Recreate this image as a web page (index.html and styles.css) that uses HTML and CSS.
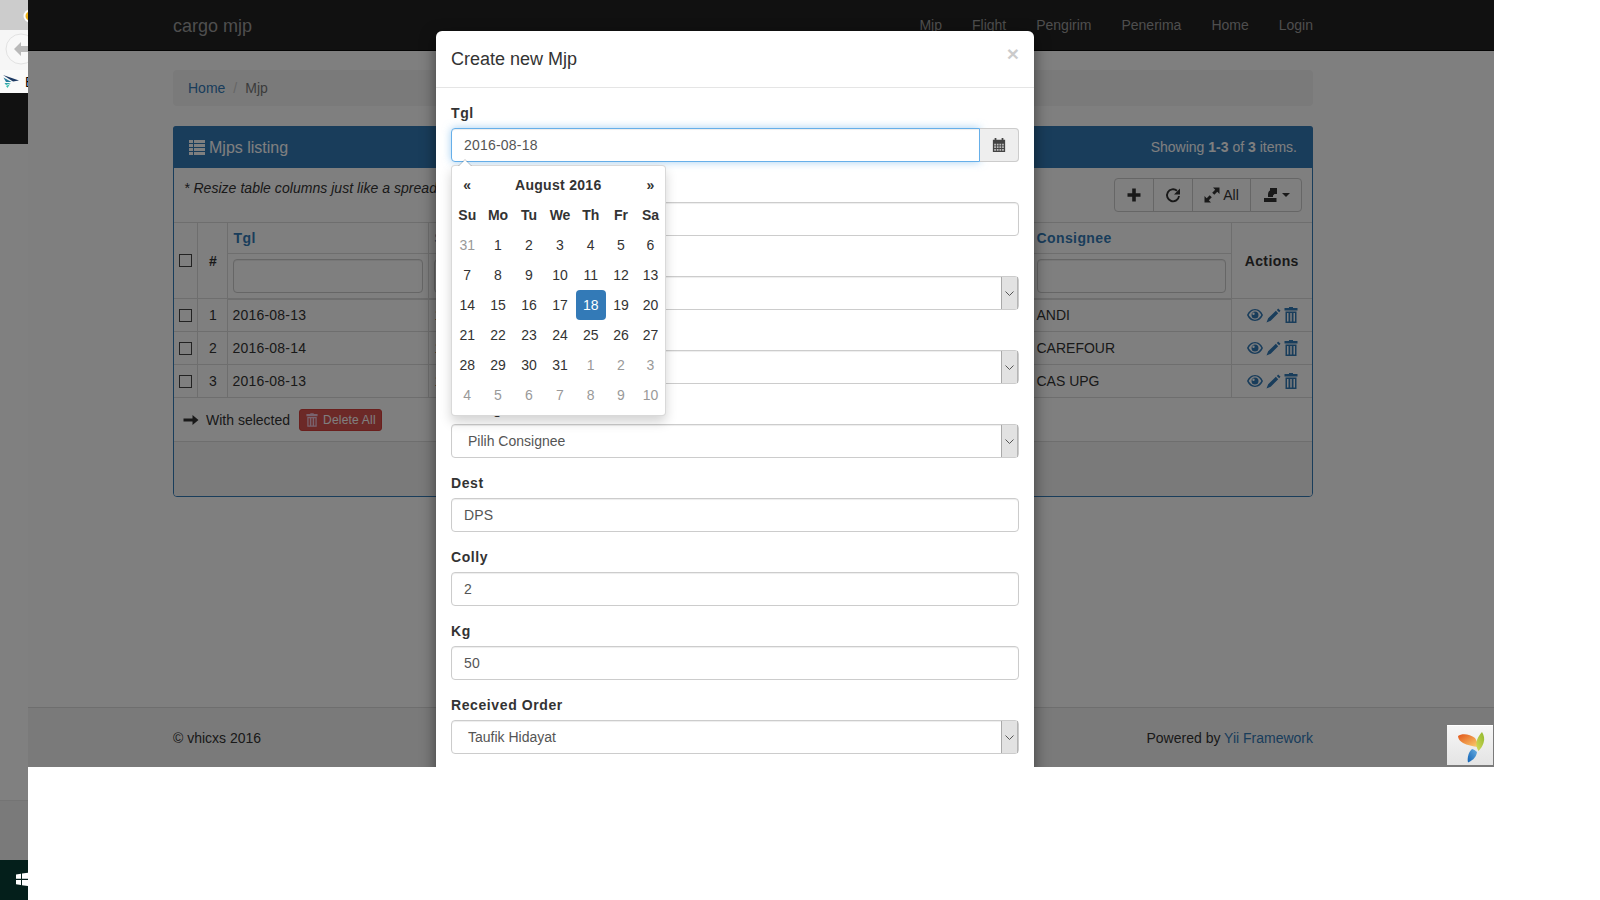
FILE: index.html
```html
<!DOCTYPE html>
<html lang="en">
<head>
  <meta charset="UTF-8" />
  <meta name="viewport" content="width=device-width, initial-scale=1" />
  <title>Mjp</title>
  <link rel="stylesheet" href="styles.css">
</head>
<body>

  <svg class="sprites">
    <symbol id="i-eye" viewBox="0 0 16 12"><path fill-rule="evenodd" d="M8 0C4 0 1.200 3 0 6c1.200 3 4 6 8 6s6.800-3 8-6c-1.200-3-4-6-8-6zM8 1.300c-2.600 0-4.900 2-6.300 4.700 1.400 2.700 3.700 4.700 6.300 4.700s4.900-2 6.300-4.700C12.900 3.300 10.600 1.300 8 1.300zM8 2.500a3.500 3.500 0 1 1 0 7 3.500 3.500 0 0 1 0-7zM6.500 3.500a1.200 1.200 0 1 0 0 2.400 1.200 1.200 0 0 0 0-2.400z"/></symbol>
    <symbol id="i-pencil" viewBox="0 0 16 16"><path d="M13 .5l2.500 2.500-1.500 1.500L11.500 2zM10.500 3L13 5.500l-8 8L.5 15.500l1.800-4.500z"/></symbol>
    <symbol id="i-trash" viewBox="0 0 14 16"><path fill-rule="evenodd" d="M5 0h4v1h4.500v2.500H.5V1H5zM1.500 4.500h11V16h-11zM3 6v8.500h1.500V6zM6.250 6v8.500h1.500V6zM9.500 6v8.500H11V6z"/></symbol>
    <symbol id="i-chevron" viewBox="0 0 9 5"><path d="M.5.500l4 4 4-4" fill="none" stroke="#555"/></symbol>
  </svg>

  <!-- sliver of the other window on the left -->
  <div class="strip">
    <div class="strip-tab">
      <svg class="strip-chrome" width="14" height="14" viewBox="0 0 14 14"><circle cx="7" cy="7" r="6.500" fill="#fff"/><path d="M2.500 7a4.500 4.500 0 0 1 4.500-4.500V7z" fill="#f1b51c"/><path d="M2.500 7a4.500 4.500 0 0 0 4.500 4.500V7z" fill="#e8b020"/></svg>
    </div>
    <div class="strip-toolbar">
      <svg width="28" height="40" viewBox="0 0 28 40"><circle cx="21" cy="19" r="15" fill="#f8f8f8" stroke="#e2e2e2"/><path d="M14 19l7-7v4h7v6h-7v4z" fill="#b9b9b9"/></svg>
    </div>
    <div class="strip-bookmarks">
      <svg class="strip-logo" width="16" height="13" viewBox="0 0 16 13"><path d="M0 0l16 5.500-6 1z" fill="#1d3a63"/><path d="M.5 2.500l8 4.500-5.500 0z" fill="#2b7f9e"/><path d="M1.500 8h6.500l-5 2z" fill="#2fa5a8"/><path d="M3 11l4-2-2.500 4z" fill="#3dbfb0"/></svg>
      <span class="strip-letter">B</span>
    </div>
    <div class="strip-black"></div>
    <div class="strip-grey"></div>
    <div class="strip-shelf"></div>
    <div class="strip-taskbar">
      <svg width="12" height="15" viewBox="0 0 12 15"><path d="M0 2.500l5-.7v5H0zM6 1.600L12 .8v6H6zM0 8h5v5l-5-.7zM6 8h6v6l-6-.8z" fill="#fff"/></svg>
    </div>
  </div>

  <div class="main">
    <nav class="navbar">
      <div class="container navbar-inner">
        <a class="brand">cargo mjp</a>
        <div class="nav-links">
          <a>Mjp</a>
          <a>Flight</a>
          <a>Pengirim</a>
          <a>Penerima</a>
          <a>Home</a>
          <a>Login</a>
        </div>
      </div>
    </nav>

    <div class="container">
      <div class="breadcrumb">
        <a>Home</a>
        <span class="crumb-sep">/</span>
        <span class="crumb-active">Mjp</span>
      </div>

      <div class="panel">
        <div class="panel-heading">
          <h3 class="panel-title">
            <svg class="icon icon-list" viewBox="0 0 16 16"><path d="M0 0h4v3H0zM5 0h11v3H5zM0 4h4v3H0zM5 4h11v3H5zM0 8h4v3H0zM5 8h11v3H5zM0 12h4v3H0zM5 12h11v3H5z"/></svg>
            Mjps listing
          </h3>
          <div class="summary">Showing <b>1-3</b> of <b>3</b> items.</div>
        </div>

        <div class="panel-tools">
          <em class="tools-note">* Resize table columns just like a spreadsheet by dragging the column edges.</em>
          <div class="btn-group">
            <a class="btn btn-add"><svg class="icon icon-lg" viewBox="0 0 16 16"><path d="M6.200 1.500h3.600v4.700h4.700v3.600H9.800v4.700H6.200V9.800H1.500V6.200h4.700z"/></svg></a>
            <a class="btn btn-add"><svg class="icon icon-lg" viewBox="0 0 16 16"><path d="M14 9a6 6 0 1 1-2-5.200" fill="none" stroke="#333" stroke-width="1.900"/><path d="M15 1.500v6H9z"/></svg></a>
            <a class="btn btn-all"><svg class="icon icon-lg" viewBox="0 0 16 16"><path d="M15.500.5v6.500l-2.200-2.200-3 3-2.100-2.100 3-3L9 .5zM.5 15.500V9l2.200 2.200 3-3 2.100 2.100-3 3L7 15.500z"/></svg> All</a>
            <a class="btn btn-export">
              <svg class="icon icon-lg" viewBox="0 0 16 16"><path d="M1 11h12.500v4H1zM5 10V7.500C5 5 6 4 7 3.500V1h7v6h-2.500L10 8.500V10z"/></svg>
              <span class="caret"></span>
            </a>
          </div>
        </div>

        <table class="grid">
          <colgroup>
            <col class="col-check"><col class="col-num"><col class="col-date">
            <col class="col-mid"><col class="col-mid"><col class="col-mid">
            <col class="col-consignee"><col class="col-actions">
          </colgroup>
          <thead>
            <tr class="head-row">
              <th rowspan="2" class="cell-check"><input type="checkbox"></th>
              <th rowspan="2" class="cell-num">#</th>
              <th><a>Tgl</a></th>
              <th><a>Smu</a></th>
              <th><a>Flight</a></th>
              <th><a>Shipper</a></th>
              <th><a>Consignee</a></th>
              <th rowspan="2" class="cell-center">Actions</th>
            </tr>
            <tr class="filter-row">
              <td><input class="filter" type="text"></td>
              <td><input class="filter" type="text"></td>
              <td><input class="filter" type="text"></td>
              <td><input class="filter" type="text"></td>
              <td><input class="filter" type="text"></td>
            </tr>
          </thead>
          <tbody>
            <tr>
              <td class="cell-check"><input type="checkbox"></td>
              <td class="cell-num">1</td>
              <td class="cell-date">2016-08-13</td>
              <td>126-1001</td>
              <td>GA 642</td>
              <td>VHICXS</td>
              <td>ANDI</td>
              <td class="cell-center">
                <span class="actions">
                  <svg class="icon-eye"><use href="#i-eye"/></svg>
                  <svg class="icon-pencil"><use href="#i-pencil"/></svg>
                  <svg class="icon-trash"><use href="#i-trash"/></svg>
                </span>
              </td>
            </tr>
            <tr>
              <td class="cell-check"><input type="checkbox"></td>
              <td class="cell-num">2</td>
              <td class="cell-date">2016-08-14</td>
              <td>126-1002</td>
              <td>GA 642</td>
              <td>VHICXS</td>
              <td>CAREFOUR</td>
              <td class="cell-center">
                <span class="actions">
                  <svg class="icon-eye"><use href="#i-eye"/></svg>
                  <svg class="icon-pencil"><use href="#i-pencil"/></svg>
                  <svg class="icon-trash"><use href="#i-trash"/></svg>
                </span>
              </td>
            </tr>
            <tr>
              <td class="cell-check"><input type="checkbox"></td>
              <td class="cell-num">3</td>
              <td class="cell-date">2016-08-13</td>
              <td>126-1003</td>
              <td>GA 642</td>
              <td>VHICXS</td>
              <td>CAS UPG</td>
              <td class="cell-center">
                <span class="actions">
                  <svg class="icon-eye"><use href="#i-eye"/></svg>
                  <svg class="icon-pencil"><use href="#i-pencil"/></svg>
                  <svg class="icon-trash"><use href="#i-trash"/></svg>
                </span>
              </td>
            </tr>
          </tbody>
        </table>

        <div class="panel-after">
          <svg class="icon icon-lg icon-arrow" viewBox="0 0 16 16"><path d="M.5 6.500h9V3L15.500 8l-6 5V9.500h-9z"/></svg>
          <span class="with-selected">With selected</span>
          <a class="btn-delete">
            <svg class="icon-delete"><use href="#i-trash"/></svg>
            Delete All
          </a>
        </div>
        <div class="panel-footer"></div>
      </div>
    </div>

    <footer class="footer">
      <div class="container footer-inner">
        <span>© vhicxs 2016</span>
        <span>Powered by <a>Yii Framework</a></span>
      </div>
    </footer>

    <div class="backdrop"></div>

    <div class="modal">
      <div class="modal-header">
        <h4 class="modal-title">Create new Mjp</h4>
        <span class="close">×</span>
      </div>
      <div class="modal-body">
        <div class="form-group">
          <label>Tgl</label>
          <div class="input-group">
            <input class="form-control focused" type="text" value="2016-08-18">
            <span class="addon">
              <svg class="icon" viewBox="0 0 16 16"><path d="M3 0h2v2h6V0h2v2h2v14H1V2h2z" fill="#444"/><path d="M2.500 6.500h2v2h-2zM5.500 6.500h2v2h-2zM8.500 6.500h2v2h-2zM11.500 6.500h2v2h-2zM2.500 9.500h2v2h-2zM5.500 9.500h2v2h-2zM8.500 9.500h2v2h-2zM11.500 9.500h2v2h-2zM2.500 12.500h2v2h-2zM5.500 12.500h2v2h-2zM8.500 12.500h2v2h-2zM11.500 12.500h2v2h-2z" fill="#bbb"/></svg>
            </span>
          </div>
        </div>
        <div class="form-group">
          <label>Smu</label>
          <input class="form-control" type="text">
        </div>
        <div class="form-group">
          <label>Flight</label>
          <div class="select"><span>Pilih Flight</span><span class="select-btn"><svg><use href="#i-chevron"/></svg></span></div>
        </div>
        <div class="form-group">
          <label>Shipper</label>
          <div class="select"><span>Pilih Shipper</span><span class="select-btn"><svg><use href="#i-chevron"/></svg></span></div>
        </div>
        <div class="form-group">
          <label>Consignee</label>
          <div class="select"><span>Pilih Consignee</span><span class="select-btn"><svg><use href="#i-chevron"/></svg></span></div>
        </div>
        <div class="form-group">
          <label>Dest</label>
          <input class="form-control" type="text" value="DPS">
        </div>
        <div class="form-group">
          <label>Colly</label>
          <input class="form-control" type="text" value="2">
        </div>
        <div class="form-group">
          <label>Kg</label>
          <input class="form-control" type="text" value="50">
        </div>
        <div class="form-group">
          <label>Received Order</label>
          <div class="select"><span>Taufik Hidayat</span><span class="select-btn"><svg><use href="#i-chevron"/></svg></span></div>
        </div>
      </div>

      <div class="datepicker">
        <div class="dp-grid">
          <b>«</b><b class="dp-month">August 2016</b><b>»</b>
          <b>Su</b><b>Mo</b><b>Tu</b><b>We</b><b>Th</b><b>Fr</b><b>Sa</b>
          <i>31</i><span>1</span><span>2</span><span>3</span><span>4</span><span>5</span><span>6</span>
          <span>7</span><span>8</span><span>9</span><span>10</span><span>11</span><span>12</span><span>13</span>
          <span>14</span><span>15</span><span>16</span><span>17</span><span class="dp-active">18</span><span>19</span><span>20</span>
          <span>21</span><span>22</span><span>23</span><span>24</span><span>25</span><span>26</span><span>27</span>
          <span>28</span><span>29</span><span>30</span><span>31</span><i>1</i><i>2</i><i>3</i>
          <i>4</i><i>5</i><i>6</i><i>7</i><i>8</i><i>9</i><i>10</i>
        </div>
      </div>
    </div>

    <div class="yii-badge">
      <svg width="30" height="31" viewBox="0 0 30 31">
        <defs>
          <linearGradient id="petalOrange" x1="0" x2="1" y1="0" y2="1"><stop offset="0" stop-color="#e2561a"/><stop offset="1" stop-color="#fbd070"/></linearGradient>
          <linearGradient id="petalGreen" x1="1" x2="0" y1="0" y2="1"><stop offset="0" stop-color="#8fb82e"/><stop offset="1" stop-color="#d6d958"/></linearGradient>
          <linearGradient id="petalBlue" x1="1" x2="0" y1="0" y2="1"><stop offset="0" stop-color="#6aaee0"/><stop offset="1" stop-color="#0f62b5"/></linearGradient>
        </defs>
        <path d="M1 4C5 1 13 2 18 6c1.500 2 2.500 5 3 9-5-.5-11-2-15-4C3 9 1 7 1 4z" fill="url(#petalOrange)"/>
        <path d="M25 0c2 3 3 7 1.500 11-1 3-3 6-5 8-2-3-3-7-1.500-11 1-3 3-6 5-8z" fill="url(#petalGreen)"/>
        <path d="M15 17c2 .5 4 2 5 3-.5 4-3 8-9 10.500-.5-2-.5-5 .5-8 .5-2 2-4 3.500-5.500z" fill="url(#petalBlue)"/>
      </svg>
    </div>
  </div>

</body>
</html>
```

FILE: styles.css
```css
* {
  box-sizing: border-box;
}

body {
  margin: 0;
  display: flex;
  align-items: flex-start;
  height: 900px;
  overflow: hidden;
  background: #fff;
  font-family: "Liberation Sans", Arial, sans-serif;
  font-size: 14px;
  line-height: 20px;
  color: #333;
}

a {
  color: #337ab7;
  text-decoration: none;
}

.sprites {
  display: none;
}

/* left sliver */
.strip {
  width: 28px;
  height: 900px;
  flex-shrink: 0;
  overflow: hidden;
  display: flex;
  flex-direction: column;
}

.strip-tab {
  height: 30px;
  background: #ccc;
  padding: 9px 0 0 23px;
}

.strip-chrome {
  display: block;
}

.strip-toolbar {
  height: 40px;
  background: #f6f6f6;
}

.strip-toolbar svg {
  display: block;
}

.strip-bookmarks {
  height: 23px;
  background: #fafafa;
  display: flex;
  align-items: center;
  padding-left: 3px;
}

.strip-logo {
  flex-shrink: 0;
}

.strip-letter {
  margin-left: 6px;
  color: #000;
  font-size: 14px;
}

.strip-black {
  height: 51px;
  background: #111;
}

.strip-grey {
  height: 657px;
  background: #808080;
  border-bottom: 1px solid #747474;
}

.strip-shelf {
  height: 59px;
  background: #7a7a7a;
}

.strip-taskbar {
  height: 40px;
  background: #041f1b;
  padding: 12px 0 0 16px;
}

.strip-taskbar svg {
  display: block;
}

/* page behind the modal */
.main {
  position: relative;
  width: 1466px;
  height: 767px;
  flex-shrink: 0;
  overflow: hidden;
  background: #fff;
  display: flex;
  flex-direction: column;
}

.container {
  width: 1140px;
  margin-left: 145px;
}

.navbar {
  height: 51px;
  flex-shrink: 0;
  background: #222;
  border-bottom: 1px solid #080808;
}

.navbar-inner {
  height: 50px;
  display: flex;
  justify-content: space-between;
  align-items: center;
}

.brand {
  font-size: 18px;
  color: #9d9d9d;
  margin-top: 2px;
}

.nav-links {
  display: flex;
  gap: 30px;
  color: #9d9d9d;
  margin-top: -1px;
}

.nav-links a {
  color: #9d9d9d;
}

.breadcrumb {
  height: 36px;
  margin: 19px 0 20px;
  padding: 8px 15px;
  background: #f5f5f5;
  border-radius: 4px;
  display: flex;
}

.crumb-sep {
  color: #ccc;
  padding: 0 8px;
}

.crumb-active {
  color: #777;
}

.panel {
  height: 371px;
  border: 1px solid #337ab7;
  border-radius: 4px;
  background: #fff;
  display: flex;
  flex-direction: column;
}

.panel-heading {
  margin: -1px -1px 0;
  height: 42px;
  flex-shrink: 0;
  background: #337ab7;
  border-radius: 3px 3px 0 0;
  padding: 0 16px;
  display: flex;
  justify-content: space-between;
  align-items: center;
  color: #fff;
}

.panel-title {
  margin: 0;
  padding-top: 1px;
  font-size: 16px;
  font-weight: 400;
  display: flex;
  align-items: center;
  gap: 4px;
}

.icon {
  width: 14px;
  height: 14px;
  fill: #333;
  flex-shrink: 0;
}

.icon-lg {
  width: 16px;
  height: 16px;
}

.icon-list {
  width: 16px;
  height: 16px;
  fill: #fff;
}

.panel-tools {
  height: 54px;
  flex-shrink: 0;
  padding: 10px;
  display: flex;
  justify-content: space-between;
}

.tools-note {
  letter-spacing: 0.04px;
}

.btn-group {
  display: flex;
  height: 34px;
}

.btn {
  height: 34px;
  border: 1px solid #ccc;
  margin-left: -1px;
  background: #fff;
  color: #333;
  display: flex;
  align-items: center;
  justify-content: center;
  gap: 3px;
}

.btn-add {
  width: 40px;
}

.btn-add:first-child {
  border-radius: 4px 0 0 4px;
}

.btn-all {
  width: 59px;
}

.btn-export {
  width: 52px;
  border-radius: 0 4px 4px 0;
}

.caret {
  width: 0;
  height: 0;
  border-top: 4px solid #333;
  border-left: 4px solid transparent;
  border-right: 4px solid transparent;
}

.grid {
  width: 1138px;
  table-layout: fixed;
  border-collapse: collapse;
  flex-shrink: 0;
}

.col-check {
  width: 23px;
}

.col-num {
  width: 30px;
}

.col-date {
  width: 201px;
}

.col-mid {
  width: 201px;
}

.col-consignee {
  width: 200px;
}

.col-actions {
  width: 81px;
}

.grid th,
.grid td {
  border: 1px solid #ddd;
  padding: 0 5px;
  vertical-align: middle;
  text-align: left;
  white-space: nowrap;
  overflow: hidden;
}

.grid th {
  letter-spacing: 0.4px;
}

.grid tr > :first-child {
  border-left: 0;
}

.grid tr > :last-child {
  border-right: 0;
}

.grid .cell-center {
  text-align: center;
}

.grid .cell-num {
  padding-left: 7px;
  text-align: center;
}

.cell-date {
  letter-spacing: 0.2px;
}

.grid .cell-check {
  padding: 0 0 0 5px;
}

.grid input[type="checkbox"] {
  appearance: none;
  display: block;
  width: 13px;
  height: 13px;
  margin: 0;
  background: #fff;
  border: 1px solid #444;
}

.head-row {
  height: 31px;
}

.head-row th:nth-child(3) {
  padding-left: 6px;
}

.head-row th:nth-child(4),
.grid tbody td:nth-child(4) {
  padding-left: 6px;
}

.filter-row {
  height: 45px;
}

.filter-row td {
  border-bottom: 2px solid #ddd;
}

.grid tbody tr {
  height: 33px;
}

.filter {
  display: block;
  width: 100%;
  height: 34px;
  border: 1px solid #ccc;
  border-radius: 4px;
  background: #fff;
  box-shadow: inset 0 1px 1px rgba(0, 0, 0, 0.075);
}

.actions {
  display: flex;
  align-items: center;
  justify-content: center;
  gap: 3px;
  margin-left: 1px;
}

.actions svg {
  fill: #337ab7;
  flex-shrink: 0;
}

.icon-eye {
  width: 16px;
  height: 12px;
}

.icon-pencil {
  width: 15px;
  height: 15px;
}

.icon-trash {
  width: 14px;
  height: 16px;
}

.panel-after {
  height: 43px;
  flex-shrink: 0;
  padding: 0 10px 0 9px;
  display: flex;
  align-items: center;
}

.with-selected {
  margin-left: 7px;
}

.btn-delete {
  margin-left: 9px;
  height: 22px;
  padding: 0 5px 0 6px;
  border: 1px solid #d43f3a;
  border-radius: 3px;
  background: #d9534f;
  color: #fff;
  font-size: 12px;
  letter-spacing: 0.2px;
  display: flex;
  align-items: center;
  gap: 5px;
}

.icon-delete {
  width: 12px;
  height: 14px;
  fill: #f3c6dc;
}

.panel-footer {
  flex: 1;
  background: #f5f5f5;
  border-top: 1px solid #ddd;
  border-radius: 0 0 3px 3px;
}

.footer {
  margin-top: auto;
  height: 60px;
  flex-shrink: 0;
  background: #f5f5f5;
  border-top: 1px solid #ddd;
}

.footer-inner {
  height: 59px;
  display: flex;
  justify-content: space-between;
  align-items: center;
}

/* modal */
.backdrop {
  position: absolute;
  inset: 0;
  background: rgba(0, 0, 0, 0.5);
}

.modal {
  position: absolute;
  left: 408px;
  top: 31px;
  width: 598px;
  height: 800px;
  background: #fff;
  border-radius: 6px;
  box-shadow: 0 5px 15px rgba(0, 0, 0, 0.5);
}

.modal-header {
  height: 57px;
  padding: 0 15px;
  border-bottom: 1px solid #e5e5e5;
  display: flex;
  justify-content: space-between;
  align-items: center;
}

.modal-title {
  margin: 0;
  font-size: 18px;
  font-weight: 400;
}

.close {
  font-size: 21px;
  font-weight: 700;
  color: #000;
  opacity: 0.2;
  margin-top: -11px;
}

.modal-body {
  padding: 15px;
}

.form-group {
  margin-bottom: 15px;
}

.form-group label {
  display: block;
  margin-bottom: 5px;
  font-weight: 700;
  letter-spacing: 0.6px;
}

.form-control {
  display: block;
  width: 100%;
  height: 34px;
  padding: 6px 12px;
  border: 1px solid #ccc;
  border-radius: 4px;
  font: inherit;
  letter-spacing: 0.2px;
  color: #555;
  background: #fff;
  box-shadow: inset 0 1px 1px rgba(0, 0, 0, 0.075);
}

.input-group {
  display: flex;
}

.focused {
  border-color: #66afe9;
  border-radius: 4px 0 0 4px;
  box-shadow: inset 0 1px 1px rgba(0, 0, 0, 0.075), 0 0 8px rgba(102, 175, 233, 0.6);
}

.addon {
  width: 39px;
  height: 34px;
  flex-shrink: 0;
  background: #eee;
  border: 1px solid #ccc;
  border-left: 0;
  border-radius: 0 4px 4px 0;
  display: flex;
  align-items: center;
  justify-content: center;
}

.select {
  height: 34px;
  padding-left: 16px;
  border: 1px solid #ccc;
  border-radius: 4px;
  color: #555;
  display: flex;
  justify-content: space-between;
  align-items: center;
  box-shadow: inset 0 1px 1px rgba(0, 0, 0, 0.075);
}

.select-btn {
  width: 17px;
  height: 32px;
  background: #e2e2e2;
  border-left: 1px solid #a9a9a9;
  border-right: 1px solid #b5b5b5;
  display: flex;
  align-items: center;
  justify-content: center;
}

.select-btn svg {
  width: 9px;
  height: 5px;
}

.datepicker {
  position: absolute;
  left: 15px;
  top: 134px;
  width: 215px;
  height: 251px;
  padding: 4px 0;
  background: #fff;
  border: 1px solid rgba(0, 0, 0, 0.15);
  border-radius: 4px;
  box-shadow: 0 6px 12px rgba(0, 0, 0, 0.175);
}

.datepicker::before {
  content: "";
  position: absolute;
  top: -7px;
  left: 6px;
  border-left: 7px solid transparent;
  border-right: 7px solid transparent;
  border-bottom: 7px solid rgba(0, 0, 0, 0.2);
}

.datepicker::after {
  content: "";
  position: absolute;
  top: -6px;
  left: 7px;
  border-left: 6px solid transparent;
  border-right: 6px solid transparent;
  border-bottom: 6px solid #fff;
}

.dp-grid {
  display: grid;
  grid-template-columns: 30.5px 31px 31px 31px 30.5px 30px 29px;
  grid-auto-rows: 30px;
  justify-items: center;
  line-height: 30px;
}

.dp-grid b,
.dp-grid span,
.dp-grid i {
  width: 30px;
  text-align: center;
  font-style: normal;
}

.dp-grid .dp-month {
  grid-column: span 5;
  width: auto;
  letter-spacing: 0.3px;
  margin-right: 2px;
}

.dp-grid i {
  color: #999;
}

.dp-active {
  background: #337ab7;
  border-radius: 4px;
  color: #fff;
}

.yii-badge {
  position: absolute;
  right: 1px;
  bottom: 2px;
  width: 46px;
  height: 40px;
  background: linear-gradient(#f6f6f6, #e4e4e4);
  border-top: 1px solid #fff;
  padding: 6px 0 0 10px;
}

.yii-badge svg {
  display: block;
}
```
